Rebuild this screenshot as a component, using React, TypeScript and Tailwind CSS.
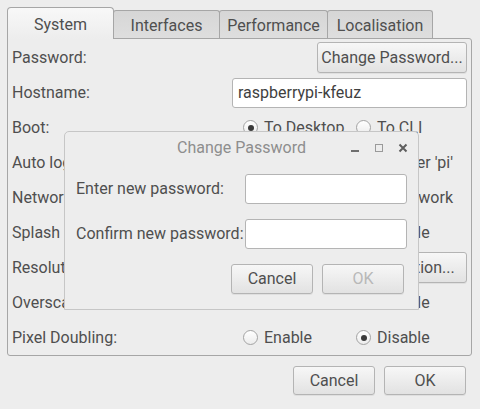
import React from "react";

const font = "font-['Roboto','Liberation_Sans',sans-serif]";

const Button = ({ label, className = "", disabled = false }) => (
    <div
        className={`flex items-center justify-center rounded-[3px] border border-[#b4b4b4] bg-gradient-to-b from-[#f7f7f7] to-[#e2e2e2] shadow-[0_1px_0_rgba(0,0,0,0.06)] ${disabled ? "text-[#b8b8b8]" : "text-[#4f4f4f]"} ${className}`}
    >
        {label}
    </div>
);

const Radio = ({ checked = false }) => (
    <span className="flex h-[15px] w-[15px] items-center justify-center rounded-full border border-[#a3a3a3] bg-gradient-to-b from-[#ffffff] to-[#ececec]">
        {checked && <span className="h-[6px] w-[6px] rounded-full bg-[#3a3a3a]" />}
    </span>
);

const RadioPair = ({ first, second, checked }) => (
    <div className="flex items-center pl-[11px]">
        <label className="flex w-[113px] items-center gap-[6px]">
            <Radio checked={checked === 0} />
            <span>{first}</span>
        </label>
        <label className="flex items-center gap-[6px]">
            <Radio checked={checked === 1} />
            <span>{second}</span>
        </label>
    </div>
);

const Check = ({ label }) => (
    <div className="flex items-center justify-end gap-[6px] pr-[14px]">
        <span className="h-[15px] w-[15px] rounded-[2px] border border-[#a3a3a3] bg-white" />
        <span>{label}</span>
    </div>
);

const Row = ({ label, children }) => (
    <div className="flex h-[35px] items-center">
        <div className="w-[220px] shrink-0 whitespace-nowrap">{label}</div>
        <div className="flex-1">{children}</div>
    </div>
);

const tabs = [
    { name: "System", w: "w-[107px]" },
    { name: "Interfaces", w: "w-[107px]" },
    { name: "Performance", w: "w-[109px]" },
    { name: "Localisation", w: "w-[106px]" },
];

const ChangePasswordDialog = () => (
    <div className="absolute left-[64px] top-[131px] flex h-[179px] w-[355px] flex-col rounded-t-[5px] border border-[#c6c6c6] bg-[#ededed]">
        <div className="relative flex h-[32px] items-center justify-center text-[#8e8e8e]">
            <span>Change Password</span>
            <div className="absolute right-[10px] top-[11px] flex items-center gap-[14px]">
                <svg width="10" height="10" viewBox="0 0 10 10">
                    <rect x="1" y="7" width="8" height="2" fill="#6e6e6e" />
                </svg>
                <svg width="10" height="10" viewBox="0 0 10 10">
                    <rect x="1.5" y="1.5" width="7" height="7" fill="none" stroke="#9a9a9a" strokeWidth="1" />
                </svg>
                <svg width="10" height="10" viewBox="0 0 10 10">
                    <path d="M1.5 1.5 L8.5 8.5 M8.5 1.5 L1.5 8.5" stroke="#5e5e5e" strokeWidth="2" />
                </svg>
            </div>
        </div>
        <div className="flex flex-col gap-[15px] px-[11px] pt-[10px]">
            <div className="flex h-[30px] items-center justify-between">
                <span>Enter new password:</span>
                <div className="h-[30px] w-[162px] rounded-[3px] border border-[#b4b4b4] bg-white" />
            </div>
            <div className="flex h-[30px] items-center justify-between">
                <span>Confirm new password:</span>
                <div className="h-[30px] w-[162px] rounded-[3px] border border-[#b4b4b4] bg-white" />
            </div>
            <div className="flex justify-end gap-[9px] pr-[3px]">
                <Button label="Cancel" className="h-[30px] w-[82px]" />
                <Button label="OK" className="h-[30px] w-[82px]" disabled />
            </div>
        </div>
    </div>
);

export default function App() {
    return (
        <div className={`relative flex h-[409px] w-[480px] flex-col overflow-hidden bg-[#ededed] text-[16px] text-[#4f4f4f] ${font}`}>
            <div className="flex items-end px-[7px] pt-[7px]">
                {tabs.map((tab, i) =>
                    i === 0 ? (
                        <div
                            key={tab.name}
                            className={`relative z-10 -mb-px flex h-[32px] items-center justify-center rounded-t-[4px] border border-b-0 border-[#a6a6a6] bg-gradient-to-b from-[#f8f8f8] to-[#ededed] pt-[2px] ${tab.w}`}
                        >
                            {tab.name}
                        </div>
                    ) : (
                        <div
                            key={tab.name}
                            className={`-ml-px flex h-[28px] items-center justify-center rounded-t-[3px] border border-b-0 border-[#a6a6a6] bg-gradient-to-b from-[#d6d6d6] to-[#dedede] pt-[2px] ${tab.w}`}
                        >
                            {tab.name}
                        </div>
                    )
                )}
            </div>
            <div className="mx-[7px] flex h-[318px] w-[465px] flex-col rounded-b-[3px] rounded-tr-[3px] border border-[#a6a6a6] pl-[4px] pr-[4px] pt-[1px]">
                <Row label="Password:">
                    <div className="flex justify-end">
                        <Button label="Change Password..." className="h-[31px] w-[150px]" />
                    </div>
                </Row>
                <Row label="Hostname:">
                    <div className="flex h-[30px] items-center rounded-[3px] border border-[#b4b4b4] bg-white px-[5px] text-[#3f3f3f]">
                        raspberrypi-kfeuz
                    </div>
                </Row>
                <Row label="Boot:">
                    <RadioPair first="To Desktop" second="To CLI" checked={0} />
                </Row>
                <Row label="Auto login:">
                    <Check label="Login as user 'pi'" />
                </Row>
                <Row label="Network at Boot:">
                    <Check label="Wait for network" />
                </Row>
                <Row label="Splash Screen:">
                    <RadioPair first="Enable" second="Disable" checked={0} />
                </Row>
                <Row label="Resolution:">
                    <div className="flex justify-end">
                        <Button label="Set Resolution..." className="h-[31px] w-[140px]" />
                    </div>
                </Row>
                <Row label="Overscan:">
                    <RadioPair first="Enable" second="Disable" checked={0} />
                </Row>
                <Row label="Pixel Doubling:">
                    <RadioPair first="Enable" second="Disable" checked={1} />
                </Row>
            </div>
            <div className="flex justify-end gap-[9px] pr-[14px] pt-[10px]">
                <Button label="Cancel" className="h-[29px] w-[82px]" />
                <Button label="OK" className="h-[29px] w-[82px]" />
            </div>
            <ChangePasswordDialog />
        </div>
    );
}
